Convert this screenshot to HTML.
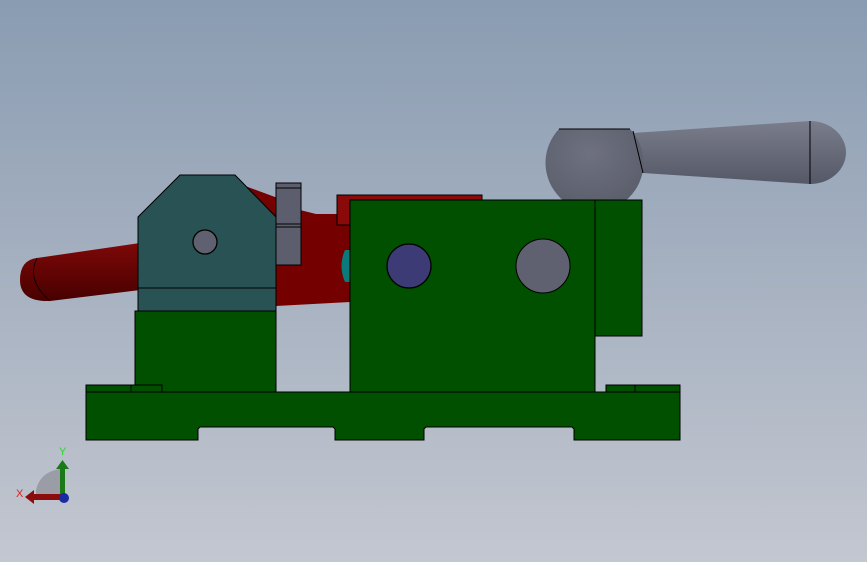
<!DOCTYPE html>
<html><head><meta charset="utf-8"><style>
html,body{margin:0;padding:0;width:867px;height:562px;overflow:hidden}
</style></head><body>
<svg width="867" height="562" viewBox="0 0 867 562" xmlns="http://www.w3.org/2000/svg">
<defs>
<linearGradient id="bg" x1="0" y1="0" x2="0" y2="1">
<stop offset="0" stop-color="#8a9cb2"/><stop offset="1" stop-color="#c3c7d0"/></linearGradient>
<linearGradient id="hd" x1="0" y1="0" x2="0" y2="1">
<stop offset="0" stop-color="#7a7d8b"/><stop offset="1" stop-color="#555866"/></linearGradient>
<radialGradient id="ball" cx="0.45" cy="0.3" r="0.7">
<stop offset="0" stop-color="#6e7180"/><stop offset="1" stop-color="#5a5d6a"/></radialGradient>
<linearGradient id="rh" x1="0" y1="0" x2="0" y2="1">
<stop offset="0" stop-color="#7e0808"/><stop offset="1" stop-color="#480000"/></linearGradient>
</defs>
<rect width="867" height="562" fill="url(#bg)"/>
<path d="M633,133 L810,121 L810,184 L643,173 Z" fill="url(#hd)"/>
<path d="M810,121 A36,31.5 0 0 1 810,184 Z" fill="url(#hd)"/>
<line x1="810" y1="121" x2="810" y2="184" stroke="#000" stroke-width="1"/>
<path d="M559,129 L630,129 A49,49 0 1 1 559,129 Z" fill="url(#ball)"/>
<line x1="559" y1="129" x2="630" y2="129" stroke="#000"/>
<line x1="633" y1="131" x2="643" y2="173" stroke="#000"/>
<path d="M37,258 L140,243 L140,290 L50,301 Q20,302 20,280 Q20,260 37,258 Z" fill="url(#rh)"/>
<path d="M37,258 Q26,280 50,301" fill="none" stroke="#000" stroke-width="0.8"/>
<path d="M245,186 L275,197 L300,210 L316,214 L350,214 L350,302 L276,306 L260,306 L245,300 Z" fill="#740000"/>
<rect x="337" y="195" width="145" height="30" fill="#8a0a0a" stroke="#000" stroke-width="1"/>
<path d="M345,250 Q338,266 345,282 L352,282 L352,250 Z" fill="#0a7a7a"/>
<rect x="276" y="183" width="25" height="82" fill="#5c5e6e" stroke="#000"/>
<line x1="276" y1="188" x2="301" y2="188" stroke="#000"/>
<line x1="276" y1="224" x2="301" y2="224" stroke="#000"/>
<line x1="276" y1="227" x2="301" y2="227" stroke="#000"/>
<path d="M138,217 L180,175 L235,175 L276,217 L276,311 L138,311 Z" fill="#285254" stroke="#000"/>
<line x1="138" y1="288" x2="276" y2="288" stroke="#000"/>
<circle cx="205" cy="242" r="12" fill="#5f6070" stroke="#000" stroke-width="1.3"/>
<rect x="135" y="311" width="141" height="81" fill="#005000" stroke="#000"/>
<rect x="350" y="200" width="245" height="192" fill="#005000" stroke="#000"/>
<rect x="595" y="200" width="47" height="136" fill="#005000" stroke="#000"/>
<circle cx="409" cy="266" r="22" fill="#3d3b75" stroke="#000" stroke-width="1.3"/>
<circle cx="543" cy="266" r="27" fill="#5f6070" stroke="#000" stroke-width="1"/>
<rect x="86" y="385" width="76" height="8" fill="#005000" stroke="#000"/>
<line x1="131" y1="385" x2="131" y2="392" stroke="#000"/>
<rect x="606" y="385" width="74" height="8" fill="#005000" stroke="#000"/>
<line x1="635" y1="385" x2="635" y2="392" stroke="#000"/>
<path d="M86,392 L680,392 L680,440 L574,440 L574,429 L572,427 L426,427 L424,429 L424,440 L335,440 L335,429 L333,427 L200,427 L198,429 L198,440 L86,440 Z" fill="#005000" stroke="#000"/>
<path d="M36,500 L36,490 Q40,472 60,469 L60,500 Z" fill="#9a9da6"/>
<rect x="60" y="468" width="5" height="30" fill="#1a7a1a"/>
<path d="M56,469 L62.5,460 L69,469 Z" fill="#1a7a1a"/>
<rect x="33" y="494" width="28" height="6" fill="#8a0c0c"/>
<path d="M34,490 L25,497 L34,504 Z" fill="#8a0c0c"/>
<circle cx="64" cy="498" r="5" fill="#1a2aa0"/>
<text x="59" y="455" font-family="Liberation Sans, sans-serif" font-size="11" fill="#22dd22">Y</text>
<text x="16" y="497" font-family="Liberation Sans, sans-serif" font-size="11" fill="#dd2222">X</text>
</svg>
</body></html>
